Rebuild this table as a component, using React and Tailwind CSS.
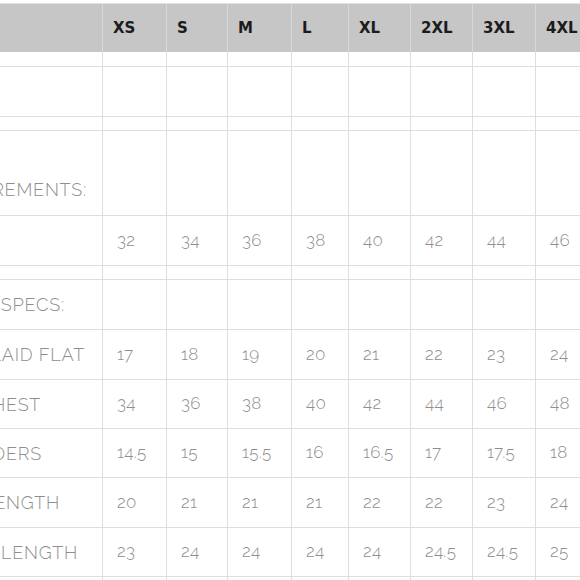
const SIZES = ['XS', 'S', 'M', 'L', 'XL', '2XL', '3XL', '4XL'];
const WIDTHS = ['w-[64px]', 'w-[61px]', 'w-[64px]', 'w-[57px]', 'w-[62px]', 'w-[62px]', 'w-[63px]', 'w-[64px]'];

// h = row height incl. bottom border, pr = how far the label ends from the first column edge
const ROWS = [
  { h: 'h-[15px]' },
  { h: 'h-[50px]' },
  { h: 'h-[14px]' },
  { h: 'h-[85px]', label: 'BODY MEASUREMENTS:', pr: 'pr-[15px]', end: true },
  { h: 'h-[50px]', values: ['32', '34', '36', '38', '40', '42', '44', '46'] },
  { h: 'h-[14px]' },
  { h: 'h-[50px]', label: 'GARMENT SPECS:', pr: 'pr-[37px]' },
  { h: 'h-[50px]', label: 'WIDTH LAID FLAT', pr: 'pr-[17px]', values: ['17', '18', '19', '20', '21', '22', '23', '24'] },
  { h: 'h-[49px]', label: 'CHEST', pr: 'pr-[61px]', values: ['34', '36', '38', '40', '42', '44', '46', '48'] },
  { h: 'h-[49px]', label: 'SHOULDERS', pr: 'pr-[60px]', values: ['14.5', '15', '15.5', '16', '16.5', '17', '17.5', '18'] },
  { h: 'h-[50px]', label: 'BODY LENGTH', pr: 'pr-[42px]', values: ['20', '21', '21', '21', '22', '22', '23', '24'] },
  { h: 'h-[49px]', label: 'SLEEVE LENGTH', pr: 'pr-[24px]', values: ['23', '24', '24', '24', '24', '24.5', '24.5', '25'] },
  { h: 'h-[30px]' },
];

const bodyFont = { fontFamily: '"Raleway", "Lato", "Open Sans", sans-serif' };

export default function App() {
  return (
    <div className="w-[580px] h-[580px] overflow-hidden bg-white">
      <div className="w-[700px] pt-[3px]">
        {/* header */}
        <div className="flex h-[49px] border-t border-[#e2e2e2] bg-[#c6c6c6]">
          <div className="w-[103px] shrink-0 border-r border-[#d8d8d8]" />
          {SIZES.map((s, i) => (
            <div
              key={s}
              className={`${WIDTHS[i]} shrink-0 flex items-center pl-[10px] border-r border-[#d8d8d8] text-[15px] font-bold text-[#1c1c1c]`}
              style={{ fontFamily: '"DejaVu Sans", Verdana, sans-serif' }}
            >
              {s}
            </div>
          ))}
        </div>

        {/* body */}
        {ROWS.map((r, ri) => (
          <div key={ri} className={`flex ${r.h} border-b border-[#dedede]`} style={bodyFont}>
            <div
              className={`w-[103px] shrink-0 flex justify-end ${r.end ? 'items-end pb-[12px]' : 'items-center'} ${r.pr || ''} border-r border-[#dedede] whitespace-nowrap text-[18px] font-light text-[#8e8e8e] tracking-[0.8px]`}
            >
              {r.label && <span>{r.label}</span>}
            </div>
            {SIZES.map((s, i) => (
              <div
                key={s}
                className={`${WIDTHS[i]} shrink-0 flex items-center pl-[14px] border-r border-[#dedede] text-[17px] font-light text-[#8e8e8e] tracking-[0.3px] oldstyle-nums`}
              >
                {r.values ? r.values[i] : ''}
              </div>
            ))}
          </div>
        ))}
      </div>
    </div>
  );
}
